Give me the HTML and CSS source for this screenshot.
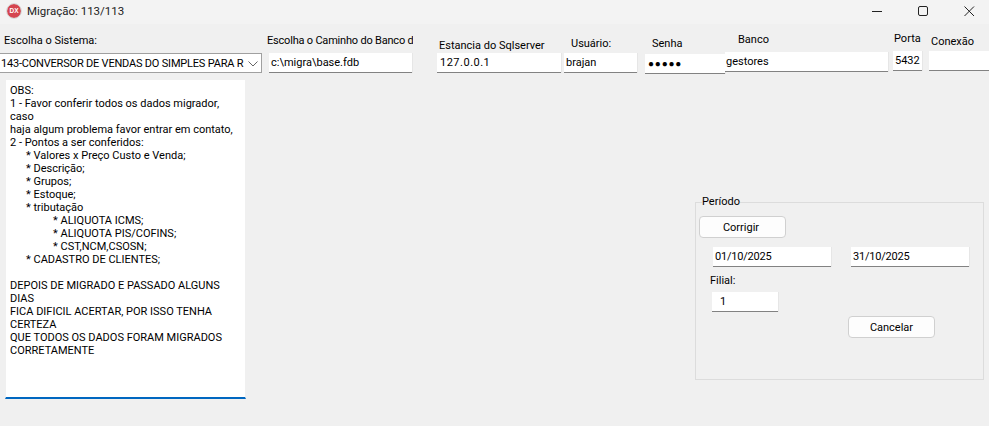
FILE: index.html
```html
<!DOCTYPE html>
<html lang="en">
<head>
  <meta charset="UTF-8">
  <title>Migração</title>
  <link rel="stylesheet" href="styles.css">
</head>
<body>
  <div class="titlebar">
    <svg class="app-icon" width="16" height="16" viewBox="0 0 16 16">
      <circle cx="8" cy="8" r="7" fill="#d5454f"/>
      <circle cx="8" cy="8" r="7.4" fill="none" stroke="#c9c9c9" stroke-width="0.7"/>
      <text x="8" y="10.2" text-anchor="middle" class="app-icon-text">DX</text>
    </svg>
    <span class="title">Migração: 113/113</span>
    <div class="win-buttons">
      <svg width="12" height="12" viewBox="0 0 12 12"><path d="M1 6.5h10" stroke="#222" fill="none"/></svg>
      <svg width="12" height="12" viewBox="0 0 12 12"><rect x="1.5" y="1.5" width="9" height="9" rx="1.5" stroke="#222" fill="none"/></svg>
      <svg width="12" height="12" viewBox="0 0 12 12"><path d="M1.5 1.5l9.5 9.5M11 1.5l-9.5 9.5" stroke="#222" fill="none"/></svg>
    </div>
  </div>

  <div class="top-row">
    <div class="col col-sistema">
      <div class="lbl">Escolha o Sistema:</div>
      <div class="select">
        <span class="select-text">143-CONVERSOR DE VENDAS DO SIMPLES PARA R</span>
        <svg width="10" height="6" viewBox="0 0 10 6"><path d="M0.5 0.5L5 5l4.5-4.5" stroke="#666" fill="none"/></svg>
      </div>
    </div>
    <div class="col col-caminho">
      <div class="lbl">Escolha o Caminho do Banco de</div>
      <div class="field">c:\migra\base.fdb</div>
    </div>
    <div class="col col-estancia">
      <div class="lbl">Estancia do Sqlserver</div>
      <div class="field">127.0.0.1</div>
    </div>
    <div class="col col-usuario">
      <div class="lbl">Usuário:</div>
      <div class="field">brajan</div>
    </div>
    <div class="col col-senha">
      <div class="lbl">Senha</div>
      <div class="field dots">●●●●●</div>
    </div>
    <div class="col col-banco">
      <div class="lbl">Banco</div>
      <div class="field">gestores</div>
    </div>
    <div class="col col-porta">
      <div class="lbl">Porta</div>
      <div class="field">5432</div>
    </div>
    <div class="col col-conexao">
      <div class="lbl">Conexão</div>
      <div class="field"></div>
    </div>
  </div>

  <div class="main-row">
    <div class="memo">
      <div>OBS:</div>
      <div>1 - Favor conferir todos os dados migrador,</div>
      <div>caso</div>
      <div>haja algum problema favor entrar em contato,</div>
      <div>2 - Pontos a ser conferidos:</div>
      <div class="ind1">* Valores x Preço Custo e Venda;</div>
      <div class="ind1">* Descrição;</div>
      <div class="ind1">* Grupos;</div>
      <div class="ind1">* Estoque;</div>
      <div class="ind1">* tributação</div>
      <div class="ind2">* ALIQUOTA ICMS;</div>
      <div class="ind2">* ALIQUOTA PIS/COFINS;</div>
      <div class="ind2">* CST,NCM,CSOSN;</div>
      <div class="ind1">* CADASTRO DE CLIENTES;</div>
      <div class="blank"></div>
      <div>DEPOIS DE MIGRADO E PASSADO ALGUNS</div>
      <div>DIAS</div>
      <div>FICA DIFICIL ACERTAR, POR ISSO TENHA</div>
      <div>CERTEZA</div>
      <div>QUE TODOS OS DADOS FORAM MIGRADOS</div>
      <div>CORRETAMENTE</div>
    </div>

    <fieldset class="group">
      <legend>Período</legend>
      <div class="btn btn-corrigir">Corrigir</div>
      <div class="dates">
        <div class="field date">01/10/2025</div>
        <div class="field date">31/10/2025</div>
      </div>
      <div class="lbl lbl-filial">Filial:</div>
      <div class="field filial">1</div>
      <div class="btn btn-cancelar">Cancelar</div>
    </fieldset>
  </div>
</body>
</html>
```

FILE: styles.css
```css
* {
  box-sizing: border-box;
}

html, body {
  margin: 0;
  height: 100%;
  overflow: hidden;
}

body {
  width: 989px;
  height: 426px;
  background: #f0f0f0;
  color: #000;
  font-family: Roboto, "Noto Sans", sans-serif;
  font-size: 11px;
}

.titlebar {
  display: flex;
  align-items: center;
  height: 24px;
  padding: 0 14px 3px 6px;
  background: #f3f3f3;
}

.app-icon {
  flex: none;
}

.app-icon-text {
  font-family: "Liberation Sans", sans-serif;
  font-size: 6.5px;
  font-weight: bold;
  fill: #fff;
}

.title {
  margin-left: 5px;
  font-size: 11.5px;
  color: #222;
}

.win-buttons {
  display: flex;
  gap: 34px;
  margin-left: auto;
}

/* top row, every control sits a bit off from the others */
.top-row {
  display: flex;
  align-items: flex-start;
  height: 56px;
  overflow: hidden;
}

.col {
  flex: none;
  display: flex;
  flex-direction: column;
}

.lbl {
  height: 15px;
  line-height: 15px;
  white-space: nowrap;
  overflow: hidden;
}

.field {
  height: 20px;
  line-height: 20px;
  padding-left: 2px;
  background: #fff;
  border-bottom: 1px solid #828282;
  box-shadow: 1px 0 0 #e6e6e6;
  white-space: nowrap;
  overflow: hidden;
}

.col-sistema {
  width: 262px;
  padding-top: 9px;
}
.col-sistema .lbl {
  padding-left: 4px;
  margin-bottom: 5px;
}

.select {
  display: flex;
  align-items: center;
  justify-content: space-between;
  height: 20px;
  padding: 1px 3px 0 1px;
  background: #fff;
  border: 1px solid #a0a0a0;
  border-left: none;
  letter-spacing: -0.2px;
  white-space: nowrap;
  overflow: hidden;
}

.select-text {
  width: 243px;
  overflow: hidden;
}

.col-caminho {
  width: 146px;
  margin-left: 5px;
  padding-top: 9px;
}
.col-caminho .lbl {
  margin-bottom: 5px;
  letter-spacing: -0.2px;
}
.col-caminho .field {
  margin-left: 2px;
  width: 143px;
}

.col-estancia {
  width: 124px;
  margin-left: 24px;
  padding-top: 14px;
}
.col-estancia .lbl {
  padding-left: 2px;
}
.col-estancia .field {
  padding-left: 3px;
  letter-spacing: 0.5px;
}

.col-usuario {
  width: 73px;
  margin-left: 3px;
  padding-top: 12px;
}
.col-usuario .lbl {
  padding-left: 7px;
  margin-bottom: 2px;
}

.col-senha {
  width: 80px;
  margin-left: 8px;
  padding-top: 12px;
}
.col-senha .lbl {
  padding-left: 7px;
  margin-bottom: 3px;
}
.dots {
  font-size: 10px;
  letter-spacing: 0.8px;
  padding-left: 3px;
}

.col-banco {
  width: 163px;
  padding-top: 8px;
}
.col-banco .lbl {
  padding-left: 13px;
  margin-bottom: 5px;
}
.col-banco .field {
  padding-left: 1px;
}

.col-porta {
  width: 29px;
  margin-left: 5px;
  padding-top: 7px;
}
.col-porta .lbl {
  padding-left: 1px;
  margin-bottom: 5px;
}

.col-conexao {
  width: 70px;
  margin-left: 7px;
  padding-top: 10px;
}
.col-conexao .lbl {
  padding-left: 2px;
  margin-bottom: 2px;
}

.main-row {
  display: flex;
  align-items: flex-start;
}

.memo {
  flex: none;
  width: 241px;
  height: 319px;
  margin-left: 5px;
  padding: 4px 0 0 4px;
  background: #fff;
  background-clip: padding-box;
  border: 0 solid transparent;
  border-width: 0 1px;
  border-bottom: 2px solid #0067c0;
  line-height: 13px;
  white-space: nowrap;
}

.memo .blank {
  height: 13px;
}

.ind1 {
  padding-left: 16px;
}

.ind2 {
  padding-left: 43px;
}

.group {
  width: 289px;
  height: 185px;
  margin: 115px 0 0 449px;
  padding: 0 0 0 3px;
  border: 1px solid #dcdcdc;
  min-width: 0;
}

.group legend {
  margin-left: 3px;
  padding: 0;
  line-height: 14px;
}

.btn {
  display: flex;
  align-items: center;
  justify-content: center;
  width: 87px;
  height: 22px;
  background: #fdfdfd;
  border: 1px solid #d0d0d0;
  border-radius: 4px;
}

.btn-corrigir {
  margin-top: 7px;
  padding-right: 3px;
}

.dates {
  display: flex;
  gap: 20px;
  margin: 9px 0 0 14px;
}

.date {
  width: 118px;
  letter-spacing: -0.2px;
}

.lbl-filial {
  margin: 6px 0 0 11px;
}

.filial {
  width: 66px;
  margin: 4px 0 0 13px;
  padding-left: 8px;
}

.btn-cancelar {
  margin: 4px 0 0 149px;
}
```
